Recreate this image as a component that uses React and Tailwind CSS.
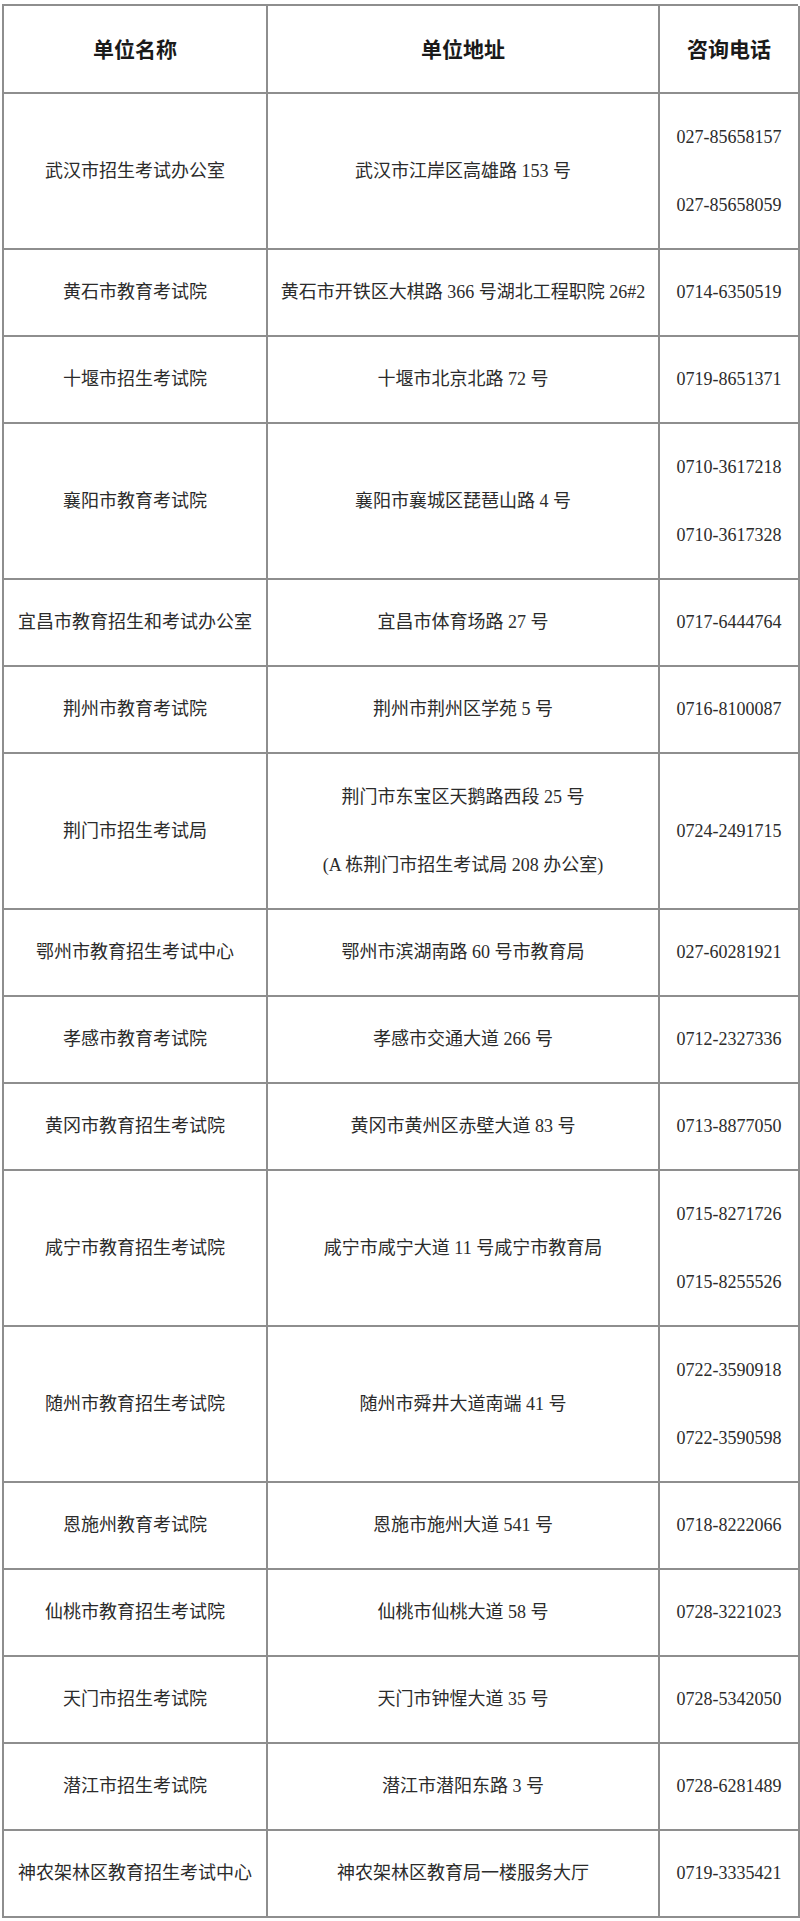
const rows = [
  { name: "武汉市招生考试办公室", addr: ["武汉市江岸区高雄路 153 号"], tel: ["027-85658157", "027-85658059"] },
  { name: "黄石市教育考试院", addr: ["黄石市开铁区大棋路 366 号湖北工程职院 26#2"], tel: ["0714-6350519"] },
  { name: "十堰市招生考试院", addr: ["十堰市北京北路 72 号"], tel: ["0719-8651371"] },
  { name: "襄阳市教育考试院", addr: ["襄阳市襄城区琵琶山路 4 号"], tel: ["0710-3617218", "0710-3617328"] },
  { name: "宜昌市教育招生和考试办公室", addr: ["宜昌市体育场路 27 号"], tel: ["0717-6444764"] },
  { name: "荆州市教育考试院", addr: ["荆州市荆州区学苑 5 号"], tel: ["0716-8100087"] },
  { name: "荆门市招生考试局", addr: ["荆门市东宝区天鹅路西段 25 号", "(A 栋荆门市招生考试局 208 办公室)"], tel: ["0724-2491715"] },
  { name: "鄂州市教育招生考试中心", addr: ["鄂州市滨湖南路 60 号市教育局"], tel: ["027-60281921"] },
  { name: "孝感市教育考试院", addr: ["孝感市交通大道 266 号"], tel: ["0712-2327336"] },
  { name: "黄冈市教育招生考试院", addr: ["黄冈市黄州区赤壁大道 83 号"], tel: ["0713-8877050"] },
  { name: "咸宁市教育招生考试院", addr: ["咸宁市咸宁大道 11 号咸宁市教育局"], tel: ["0715-8271726", "0715-8255526"] },
  { name: "随州市教育招生考试院", addr: ["随州市舜井大道南端 41 号"], tel: ["0722-3590918", "0722-3590598"] },
  { name: "恩施州教育考试院", addr: ["恩施市施州大道 541 号"], tel: ["0718-8222066"] },
  { name: "仙桃市教育招生考试院", addr: ["仙桃市仙桃大道 58 号"], tel: ["0728-3221023"] },
  { name: "天门市招生考试院", addr: ["天门市钟惺大道 35 号"], tel: ["0728-5342050"] },
  { name: "潜江市招生考试院", addr: ["潜江市潜阳东路 3 号"], tel: ["0728-6281489"] },
  { name: "神农架林区教育招生考试中心", addr: ["神农架林区教育局一楼服务大厅"], tel: ["0719-3335421"] },
];

function Lines({ items }) {
  return (
    <div className="flex flex-col items-center gap-[41px]">
      {items.map((t) => (
        <div key={t} className="whitespace-nowrap leading-[27px]">{t}</div>
      ))}
    </div>
  );
}

export default function App() {
  const cell = "flex items-center justify-center border-r-2 border-b-2 border-[#8e8e8e] text-center";
  return (
    <div className="bg-white w-[800px] min-h-[1921px] pt-[4px] pl-[2px]">
      <div
        className="grid grid-cols-[264px_392px_140px] w-[796px] border-t-2 border-l-2 border-[#8e8e8e] text-[#2b2b2b] text-[18px]"
        style={{ fontFamily: '"Liberation Serif", "Noto Sans CJK SC", serif' }}
      >
        {["单位名称", "单位地址", "咨询电话"].map((h) => (
          <div
            key={h}
            className={`${cell} h-[88px] text-[21px] font-bold text-[#1a1a1a]`}
            style={{ fontFamily: '"Noto Sans CJK SC", sans-serif' }}
          >
            {h}
          </div>
        ))}
        {rows.map((r) => {
          const tall = r.addr.length > 1 || r.tel.length > 1;
          const h = tall ? "h-[156px]" : "h-[87px]";
          return [
            <div key={r.name + "n"} className={`${cell} ${h} whitespace-nowrap`}>{r.name}</div>,
            <div key={r.name + "a"} className={`${cell} ${h}`}><Lines items={r.addr} /></div>,
            <div key={r.name + "t"} className={`${cell} ${h}`}><Lines items={r.tel} /></div>,
          ];
        })}
      </div>
    </div>
  );
}
